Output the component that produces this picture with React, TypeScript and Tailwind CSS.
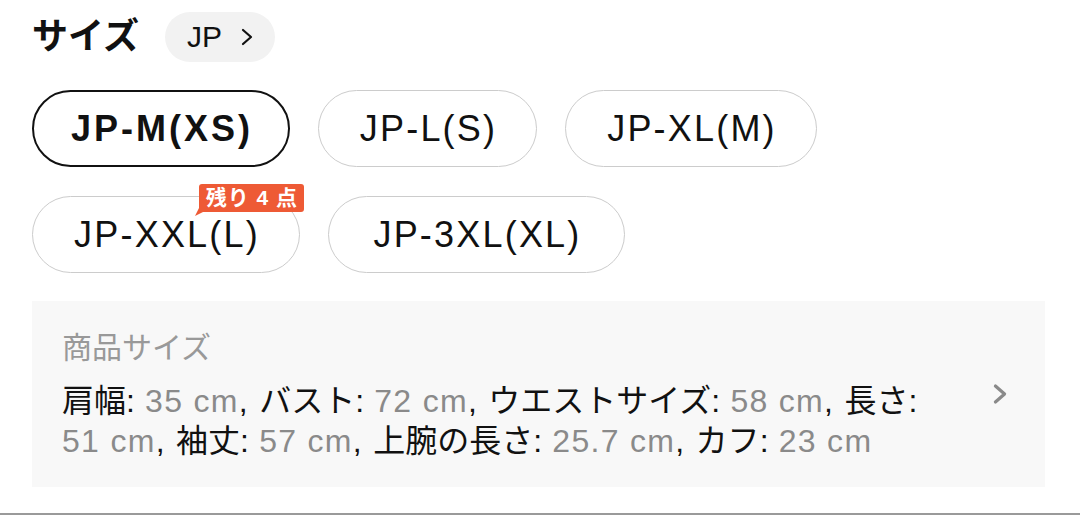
import React from "react";

const FONT = "font-['Liberation_Sans','Noto_Sans_CJK_JP',sans-serif]";

function Chevron({ className, sw = 2.2 }: { className?: string; sw?: number }) {
  return (
    <svg viewBox="0 0 14 18" className={className} fill="none">
      <path d="M3 2 L11 9 L3 16" stroke="currentColor" strokeWidth={sw} strokeLinecap="round" strokeLinejoin="round" />
    </svg>
  );
}

type Size = { label: string; w: string; selected?: boolean; badge?: string };

const row1: Size[] = [
  { label: "JP-M(XS)", w: "w-[258px]", selected: true },
  { label: "JP-L(S)", w: "w-[219px]" },
  { label: "JP-XL(M)", w: "w-[252px]" },
];
const row2: Size[] = [
  { label: "JP-XXL(L)", w: "w-[268px]", badge: "残り 4 点" },
  { label: "JP-3XL(XL)", w: "w-[297px]" },
];

function SizeButton({ s }: { s: Size }) {
  return (
    <div
      className={`relative ${s.w} h-[77px] rounded-full flex items-center justify-center text-[36px] text-[#111] ${
        s.selected
          ? "border-2 border-[#111] font-bold tracking-[3px]"
          : "border border-[#cccccc] tracking-[2.2px]"
      }`}
    >
      <span className="pl-[2px]">{s.label}</span>
      {s.badge && (
        <div className="absolute top-[-13px] right-[-5px] h-[28px] pl-[7px] pr-[6px] bg-[#ee5a35] rounded-[3px] text-white text-[21px] font-bold leading-[28px] tracking-[1px] whitespace-pre">
          {"残り 4 点"}
          <svg className="absolute left-[-4px] bottom-[-4px]" width="8" height="8" viewBox="0 0 8 8">
            <path d="M4 0 L8 0 L8 4 L0 8 Z" fill="#ee5a35" />
          </svg>
        </div>
      )}
    </div>
  );
}

function V({ children }: { children: React.ReactNode }) {
  return <span className="text-[#8a8a8a] tracking-[1.3px]">{children}</span>;
}

function Item({ k, v, last }: { k: string; v: string; last?: boolean }) {
  return (
    <>
      <span className="text-[#111]">{k}:</span>
      <V> {v}</V>
      {!last && <span className="text-[#111] tracking-[1.3px]">, </span>}
    </>
  );
}

export default function App() {
  return (
    <div className={`${FONT} w-[1080px] h-[515px] bg-white flex flex-col overflow-hidden`}>
      <div className="px-[32px] pt-[12px] flex-1">
        <div className="flex items-center h-[50px]">
          <span className="text-[36px] font-bold text-[#111] leading-none">サイズ</span>
          <div className="ml-[26px] h-[50px] rounded-full bg-[#f2f2f2] flex items-center pl-[22px] pr-[21px] gap-[18px]">
            <span className="text-[30px] text-[#111] leading-none">JP</span>
            <Chevron className="w-[14px] h-[18px] text-[#111]" />
          </div>
        </div>

        <div className="mt-[28px] flex flex-col gap-[29px]">
          <div className="flex gap-[28px]">
            {row1.map((s) => (
              <SizeButton key={s.label} s={s} />
            ))}
          </div>
          <div className="flex gap-[28px]">
            {row2.map((s) => (
              <SizeButton key={s.label} s={s} />
            ))}
          </div>
        </div>

        <div className="mt-[28px] w-[1013px] h-[186px] bg-[#f8f8f8] flex items-center pl-[30px] pr-[37px]">
          <div className="flex-1 leading-[40px]">
            <div className="text-[30px] text-[#999999] mb-[13px]">商品サイズ</div>
            <div className="text-[32px]">
              <Item k="肩幅" v="35 cm" />
              <Item k="バスト" v="72 cm" />
              <Item k="ウエストサイズ" v="58 cm" />
              <span className="text-[#111]">長さ:</span>
              <br />
              <V>51 cm</V>
              <span className="text-[#111] tracking-[1.3px]">, </span>
              <Item k="袖丈" v="57 cm" />
              <Item k="上腕の長さ" v="25.7 cm" />
              <Item k="カフ" v="23 cm" last />
            </div>
          </div>
          <Chevron className="w-[16px] h-[22px] text-[#8a8a8a]" sw={2.8} />
        </div>
      </div>
      <div className="h-[2px] bg-[#9a9a9a]" />
    </div>
  );
}
